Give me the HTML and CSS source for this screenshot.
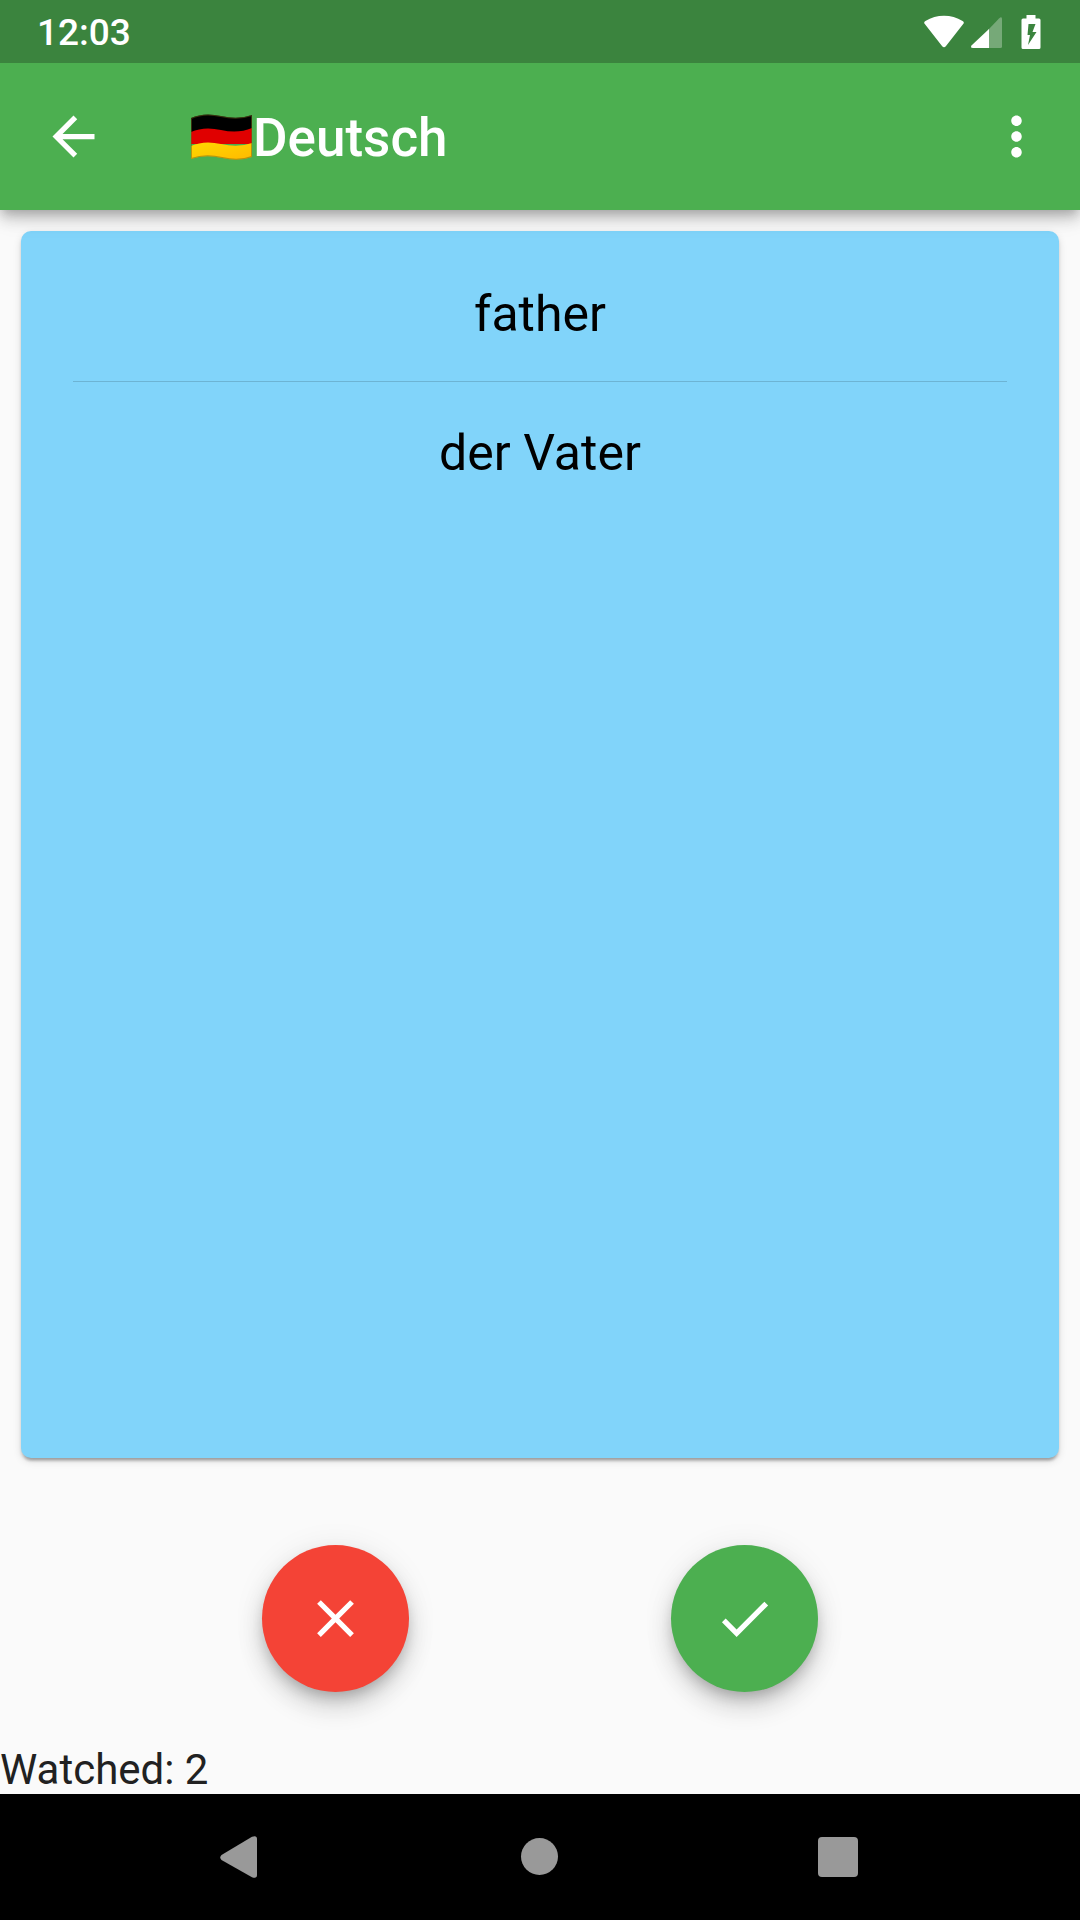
FILE: index.html
```html
<!DOCTYPE html>
<html lang="en">
<head>
<meta charset="utf-8">
<meta name="viewport" content="width=device-width, initial-scale=1">
<title>Deutsch</title>
<link rel="stylesheet" href="styles.css">
</head>
<body>
<div class="status-bar">
  <time class="clock">12:03</time>
  <div class="status-icons">
    <svg class="wifi" width="42" height="34" viewBox="0 0 42 34" aria-hidden="true"><path d="M2.200 9.500Q0 7.700 2.400 6Q11 .8 21 .8T39.600 6Q42 7.700 39.800 9.500L23 31Q21 33.500 19 31Z" fill="#fff"/></svg>
    <svg class="signal" width="32" height="34" viewBox="0 0 32 34" aria-hidden="true"><path d="M18.500 14.500L29 3.500Q32 1 32 4V31.500Q32 33 30.500 33H18.500Z" fill="#fff" opacity=".3"/><path d="M19 14V33H3Q0 33 1.500 30.500Z" fill="#fff"/></svg>
    <svg class="battery" width="20" height="34" viewBox="0 0 20 34" aria-hidden="true"><path fill-rule="evenodd" d="M5.500 0H14.500V3.500H18Q19.500 3.500 19.500 5V32.500Q19.500 34 18 34H2Q.5 34 .5 32.500V5Q.5 3.500 2 3.500H5.500ZM7.500 9L6.500 20H9L7 30L15.500 17H11.500L14.500 9Z" fill="#fff"/></svg>
  </div>
</div>
<header class="app-bar">
  <button class="icon-button" type="button" aria-label="Back">
    <svg class="icon" viewBox="0 0 24 24" aria-hidden="true"><path d="M20 11H7.830l5.590-5.590L12 4l-8 8 8 8 1.410-1.410L7.830 13H20v-2z"/></svg>
  </button>
  <h1 class="title">
    <svg class="flag" width="64" height="46" viewBox="0 0 64 46" role="img" aria-label="Germany">
      <defs>
        <linearGradient id="gold" x1="0" x2="1" y1="0" y2="1"><stop offset="0" stop-color="#ffd900"/><stop offset="1" stop-color="#ffb900"/></linearGradient>
        <clipPath id="cloth"><path d="M2 4Q15-2 32 2T63 1V43Q50 48 33 44T2 45Z"/></clipPath>
      </defs>
      <g clip-path="url(#cloth)">
        <path d="M0 0H64V20H0Z"/>
        <path d="M2 18Q15 12 32 16T63 14V30H2Z" fill="#e00000"/>
        <path d="M2 32Q15 26 32 30T63 29V46H2Z" fill="url(#gold)"/>
        <path d="M2 4Q15-2 32 2T63 1V43Q50 48 33 44T2 45Z" fill="none" stroke="#72601a" stroke-opacity=".5" stroke-width="2"/>
      </g>
    </svg><span class="title-text">Deutsch</span>
  </h1>
  <button class="icon-button" type="button" aria-label="More options">
    <svg class="icon" viewBox="0 0 24 24" aria-hidden="true"><path d="M12 8c1.100 0 2-.9 2-2s-.9-2-2-2-2 .9-2 2 .9 2 2 2zm0 2c-1.100 0-2 .9-2 2s.9 2 2 2 2-.9 2-2-.9-2-2-2zm0 6c-1.100 0-2 .9-2 2s.9 2 2 2 2-.9 2-2-.9-2-2-2z"/></svg>
  </button>
</header>
<main class="content">
  <section class="card">
    <p class="word">father</p>
    <hr class="divider">
    <p class="word">der Vater</p>
  </section>
  <div class="answers">
    <button class="fab fab-wrong" type="button" aria-label="Wrong">
      <svg class="icon" viewBox="0 0 24 24" aria-hidden="true"><path d="M19 6.410L17.590 5 12 10.590 6.410 5 5 6.410 10.590 12 5 17.590 6.410 19 12 13.410 17.590 19 19 17.590 13.410 12z"/></svg>
    </button>
    <button class="fab fab-right" type="button" aria-label="Right">
      <svg class="icon" viewBox="0 0 24 24" aria-hidden="true"><path d="M9 16.170L4.830 12l-1.420 1.410L9 19 21 7l-1.410-1.410z"/></svg>
    </button>
  </div>
  <p class="watched">Watched: 2</p>
</main>
<nav class="system-nav" aria-label="System">
  <button class="nav-button" type="button" aria-label="Back">
    <svg width="44" height="44" viewBox="0 0 44 44" aria-hidden="true"><path d="M1.500 20L32 1.800Q37 0 37 4V40Q37 44 32 42.200L1.500 25Q-1 22.500 1.500 20Z"/></svg>
  </button>
  <button class="nav-button" type="button" aria-label="Home">
    <svg width="44" height="44" viewBox="0 0 44 44" aria-hidden="true"><circle cx="21.500" cy="21.500" r="18.500"/></svg>
  </button>
  <button class="nav-button" type="button" aria-label="Recent apps">
    <svg width="44" height="44" viewBox="0 0 44 44" aria-hidden="true"><rect x="2" y="2" width="40" height="40" rx="4"/></svg>
  </button>
</nav>
</body>
</html>
```
FILE: styles.css
```css
* {
  box-sizing: border-box;
}

body {
  margin: 0;
  min-height: 100vh;
  display: flex;
  flex-direction: column;
  background: #fafafa;
  color: #212121;
  font-family: Roboto, "Liberation Sans", sans-serif;
}

h1,
p {
  margin: 0;
  font-weight: 400;
}

button {
  padding: 0;
  border: 0;
  background: none;
  display: grid;
  place-items: center;
  cursor: pointer;
}

svg {
  display: block;
}

.icon {
  width: 63px;
  height: 63px;
  fill: #fff;
}

/* Stacked above the app bar so its shadow only falls on the content. */
.status-bar {
  z-index: 2;
  height: 63px;
  padding: 0 39px 0 37px;
  display: flex;
  align-items: center;
  justify-content: space-between;
  background: #3b843e;
  color: #fff;
}

.clock {
  padding-top: 3px;
  font-size: 37px;
  line-height: 44px;
  font-weight: 500;
}

.status-icons {
  display: flex;
}

.signal {
  margin: 0 19px 0 5px;
}

.app-bar {
  z-index: 1;
  height: 147px;
  padding: 0 32px 0 42px;
  display: flex;
  align-items: center;
  background: #4caf50;
  color: #fff;
  box-shadow: 0 5px 10px -3px rgba(0, 0, 0, 0.2),
    0 10px 13px rgba(0, 0, 0, 0.14), 0 3px 26px rgba(0, 0, 0, 0.12);
}

.title {
  flex: 1;
  margin-left: 84px;
  display: flex;
  align-items: center;
  font-size: 53px;
  line-height: 62px;
  font-weight: 500;
}

.title-text {
  padding-top: 2px;
}

.content {
  flex: 1;
  display: flex;
  flex-direction: column;
}

.card {
  flex: 1;
  margin: 21px;
  padding: 52px;
  border-radius: 10px;
  background: #81d4fa;
  color: #000;
  text-align: center;
  box-shadow: 0 5px 3px -3px rgba(0, 0, 0, 0.2),
    0 3px 3px rgba(0, 0, 0, 0.14), 0 3px 8px rgba(0, 0, 0, 0.12);
}

.word {
  font-size: 50px;
  line-height: 62px;
}

.divider {
  height: 1px;
  margin: 36px 0 40px;
  border: 0;
  background: rgba(0, 0, 0, 0.15);
}

.answers {
  padding: 66px 0 53px;
  display: flex;
  justify-content: space-evenly;
}

.fab {
  width: 147px;
  height: 147px;
  border-radius: 50%;
  box-shadow: 0 8px 13px -3px rgba(0, 0, 0, 0.2),
    0 16px 26px rgba(0, 0, 0, 0.14), 0 3px 32px rgba(0, 0, 0, 0.08);
}

.fab-wrong {
  background: #f44336;
}

.fab-right {
  background: #4caf50;
}

.watched {
  font-size: 42px;
  line-height: 49px;
}

.system-nav {
  height: 126px;
  padding: 0 93px;
  display: grid;
  grid-template-columns: repeat(3, 1fr);
  background: #000;
}

.nav-button {
  fill: #999;
}
```
